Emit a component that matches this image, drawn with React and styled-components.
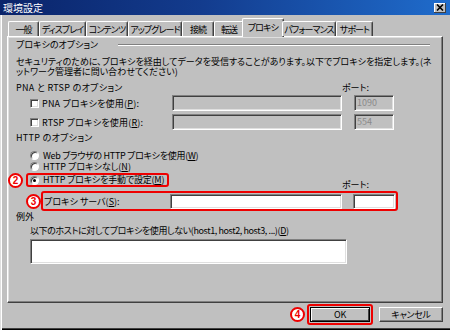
import React from "react";
import styled, { createGlobalStyle } from "styled-components";

const GlobalStyle = createGlobalStyle`
  html, body {
    margin: 0;
    padding: 0;
    background: #c0c0c0;
  }
  body {
    width: 450px;
    height: 330px;
    overflow: hidden;
    font-family: "Noto Sans CJK JP", "Noto Sans", sans-serif;
    font-size: 9px;
    font-feature-settings: "palt";
    color: #000;
  }
  * {
    box-sizing: border-box;
  }
`;

const Window = styled.div`
  width: 450px;
  height: 330px;
  display: flex;
  flex-direction: column;
  background: #c0c0c0;
  box-shadow: inset 1px 0 #dfdfdf, inset 2px 0 #ffffff, inset 0 -1px #000,
    inset 0 -2px #404040;
`;

const TitleBar = styled.div`
  flex: none;
  height: 15px;
  display: flex;
  align-items: center;
  justify-content: space-between;
  padding: 0 4px 0 3px;
  background: linear-gradient(90deg, #0a246a 0%, #133c8e 45%, #1f6ccc 100%);
  color: #fff;
  font-size: 10px;
  line-height: 15px;
`;

const CloseBtn = styled.div`
  width: 12px;
  height: 10px;
  display: flex;
  align-items: center;
  justify-content: center;
  background: #c0c0c0;
  box-shadow: inset -1px -1px #404040, inset 1px 1px #fff;
`;

const Body = styled.div`
  flex: 1;
  display: flex;
  flex-direction: column;
  padding: 0 7px;
`;

const TabStrip = styled.div`
  display: flex;
  align-items: flex-end;
  height: 18px;
  margin: 3px 0 0 1px;
  position: relative;
  z-index: 1;
`;

const Tab = styled.div`
  width: ${(p) => (p.$active ? p.$w + 4 : p.$w)}px;
  height: ${(p) => (p.$active ? 19 : 15)}px;
  margin: ${(p) => (p.$active ? "0 -2px -1px" : "0")};
  display: flex;
  align-items: center;
  justify-content: center;
  padding-bottom: ${(p) => (p.$active ? 2 : 0)}px;
  background: #c0c0c0;
  border-top: 1px solid #fff;
  border-left: 1px solid #fff;
  border-right: 1px solid #404040;
  border-radius: 2px 2px 0 0;
  box-shadow: inset -1px 0 #808080;
  white-space: nowrap;
  letter-spacing: -0.9px;
  line-height: 1;
`;

const Panel = styled.div`
  height: 267px;
  padding: 1px 9px 0 8px;
  border: 1px solid;
  border-color: #fff #404040 #404040 #fff;
  box-shadow: inset -1px -1px #808080, inset 1px 1px #dfdfdf;
  display: flex;
  flex-direction: column;
`;

const GroupHead = styled.div`
  height: 12px;
  display: flex;
  align-items: center;
  white-space: nowrap;
`;

const GroupLine = styled.div`
  flex: 1;
  height: 2px;
  margin: 1px 3px 0 20px;
  border-top: 1px solid #808080;
  border-bottom: 1px solid #fff;
`;

const Desc = styled.div`
  margin-top: 7px;
  line-height: 10px;
  white-space: nowrap;
`;

const Label = styled.div`
  margin-top: ${(p) => p.$mt}px;
  padding-left: ${(p) => p.$indent || 0}px;
  height: 12px;
  line-height: 12px;
  letter-spacing: ${(p) => p.$ls || 0}px;
  white-space: nowrap;
`;

const Text = styled.span`
  letter-spacing: ${(p) => p.$ls || 0}px;
`;

const SectionRow = styled.div`
  margin-top: ${(p) => p.$mt}px;
  height: 12px;
  line-height: 12px;
  display: grid;
  grid-template-columns: 326px auto;
  white-space: nowrap;
`;

const OptionRow = styled.div`
  margin-top: ${(p) => p.$mt}px;
  height: 16px;
  display: grid;
  grid-template-columns: 144px 170px 40px;
  column-gap: 12px;
  align-items: center;
`;

const Check = styled.label`
  display: flex;
  align-items: center;
  gap: 3px;
  padding-left: 14px;
  white-space: nowrap;
`;

const Box = styled.span`
  width: 9px;
  height: 9px;
  flex: none;
  background: #fff;
  border: 1px solid;
  border-color: #808080 #fff #fff #808080;
  box-shadow: inset 1px 1px #404040, inset -1px -1px #dfdfdf;
`;

const Field = styled.div`
  height: ${(p) => p.$h || 16}px;
  width: ${(p) => (p.$w ? `${p.$w}px` : "auto")};
  margin-left: ${(p) => p.$ml || 0}px;
  margin-top: ${(p) => p.$mt || 0}px;
  padding: 1px 2px;
  background: ${(p) => (p.$off ? "#c0c0c0" : "#fff")};
  color: #8a8a8a;
  border: 1px solid;
  border-color: #808080 #fff #fff #808080;
  box-shadow: inset 1px 1px #404040, inset -1px -1px #dfdfdf;
  font-size: 9px;
  line-height: 12px;
`;

const Choice = styled.div`
  position: relative;
  margin-top: ${(p) => p.$mt}px;
  height: 11px;
  line-height: 11px;
  display: flex;
  align-items: center;
  gap: 4px;
  padding-left: 14px;
  white-space: nowrap;
`;

const Radio = styled.span`
  position: relative;
  width: 9px;
  height: 9px;
  flex: none;
  border-radius: 50%;
  background: #fff;
  border: 1px solid;
  border-color: #808080 #fff #fff #808080;
  box-shadow: inset 1px 1px #404040;
  &::after {
    content: "";
    display: ${(p) => (p.$on ? "block" : "none")};
    position: absolute;
    left: 2px;
    top: 2px;
    width: 3px;
    height: 3px;
    border-radius: 50%;
    background: #000;
  }
`;

const ManualRow = styled.div`
  position: relative;
  margin-top: 1px;
  height: 14px;
  display: grid;
  grid-template-columns: 326px auto;
`;

const Marked = styled.div`
  justify-self: start;
  margin-left: ${(p) => p.$ml}px;
  border: 2px solid #ee0000;
  border-radius: 3px;
`;

const ManualChoice = styled.div`
  height: 10px;
  line-height: 10px;
  display: flex;
  align-items: center;
  gap: 4px;
  padding: 0 3px 0 2px;
  white-space: nowrap;
`;

const PortHead = styled.span`
  align-self: end;
  line-height: 10px;
  margin-bottom: -3px;
  white-space: nowrap;
`;

const ServerRow = styled.div`
  position: relative;
  margin-top: 4px;
  height: 20px;
  display: flex;
`;

const ServerGrid = styled.div`
  height: 16px;
  display: grid;
  grid-template-columns: 115px 172px 42px;
  column-gap: 11px;
  align-items: center;
  padding: 0 1px;
  white-space: nowrap;
`;

const Badge = styled.span`
  position: absolute;
  left: ${(p) => p.$x}px;
  top: ${(p) => p.$y}px;
  width: 15px;
  height: 15px;
  border-radius: 50%;
  border: 2px solid #ee0000;
  background: #fff;
  color: #ee0000;
  font-family: "Liberation Sans", "Noto Sans", sans-serif;
  font-weight: bold;
  font-size: 10px;
  line-height: 11px;
  text-align: center;
  z-index: 2;
`;

const Footer = styled.div`
  display: flex;
  justify-content: flex-end;
  align-items: center;
  gap: 6px;
  margin-top: 1px;
`;

const OkFrame = styled.div`
  position: relative;
  padding: 1px;
  border: 2px solid #ee0000;
  border-radius: 3px;
`;

const Button = styled.div`
  width: ${(p) => p.$w}px;
  height: 15px;
  display: flex;
  align-items: center;
  justify-content: center;
  background: #c0c0c0;
  border: 1px solid;
  border-color: ${(p) => (p.$default ? "#000" : "#fff #404040 #404040 #fff")};
  box-shadow: ${(p) =>
    p.$default
      ? "inset 1px 1px #fff, inset -1px -1px #404040"
      : "inset -1px -1px #808080"};
  font-size: 9px;
  letter-spacing: -0.3px;
  line-height: 1;
`;

const tabs = [
  { label: "一般", w: 31 },
  { label: "ディスプレイ", w: 47 },
  { label: "コンテンツ", w: 42 },
  { label: "アップグレード", w: 54 },
  { label: "接続", w: 32 },
  { label: "転送", w: 30 },
  { label: "プロキシ", w: 38, active: true },
  { label: "パフォーマンス", w: 54 },
  { label: "サポート", w: 37 },
];

const App = () => {
  return (
    <>
      <GlobalStyle />
      <Window>
        <TitleBar>
          <span>環境設定</span>
          <CloseBtn>
            <svg width="8" height="7" viewBox="0 0 8 7">
              <path d="M1 0.5 L7 6.5 M7 0.5 L1 6.5" stroke="#000" strokeWidth="1.6" />
            </svg>
          </CloseBtn>
        </TitleBar>
        <Body>
          <TabStrip>
            {tabs.map((t) => (
              <Tab key={t.label} $w={t.w} $active={t.active}>
                {t.label}
              </Tab>
            ))}
          </TabStrip>
          <Panel>
            <GroupHead>
              プロキシのオプション
              <GroupLine />
            </GroupHead>
            <Desc>
              セキュリティのために、プロキシを経由してデータを受信することがあります。以下でプロキシを指定します。(ネ
              <br />
              ットワーク管理者に問い合わせてください)
            </Desc>

            <SectionRow $mt={5}>
              <Text $ls={0.3}>PNA と RTSP のオプション</Text>
              <span>ポート:</span>
            </SectionRow>
            <OptionRow $mt={1}>
              <Check>
                <Box />
                <Text $ls={0.2}>
                  PNA プロキシを使用(<u>P</u>):
                </Text>
              </Check>
              <Field $off />
              <Field $off>1090</Field>
            </OptionRow>
            <OptionRow $mt={3}>
              <Check>
                <Box />
                <Text $ls={0.2}>
                  RTSP プロキシを使用(<u>R</u>):
                </Text>
              </Check>
              <Field $off />
              <Field $off>554</Field>
            </OptionRow>

            <Label $mt={2} $ls={0.3}>
              HTTP のオプション
            </Label>
            <Choice $mt={6}>
              <Radio />
              <Text $ls={-0.3}>
                Web ブラウザの HTTP プロキシを使用(<u>W</u>)
              </Text>
            </Choice>
            <Choice $mt={0}>
              <Radio />
              <span>
                HTTP プロキシなし(<u>N</u>)
              </span>
            </Choice>
            <ManualRow>
              <Badge $x={-8} $y={0}>2</Badge>
              <Marked $ml={10}>
                <ManualChoice>
                  <Radio $on />
                  <Text $ls={-0.2}>
                    HTTP プロキシを手動で設定(<u>M</u>)
                  </Text>
                </ManualChoice>
              </Marked>
              <PortHead>ポート:</PortHead>
            </ManualRow>
            <ServerRow>
              <Badge $x={10} $y={3}>3</Badge>
              <Marked $ml={25}>
                <ServerGrid>
                  <span>
                    プロキシ サーバ(<u>S</u>):
                  </span>
                  <Field $h={15} />
                  <Field $h={15} />
                </ServerGrid>
              </Marked>
            </ServerRow>

            <Label $mt={0}>例外</Label>
            <Label $mt={2} $indent={14} $ls={-0.4}>
              以下のホストに対してプロキシを使用しない(host1, host2, host3, ...)(<u>D</u>)
            </Label>
            <Field $h={25} $w={317} $ml={14} $mt={2} />
          </Panel>
          <Footer>
            <OkFrame>
              <Badge $x={-19} $y={1}>4</Badge>
              <Button $w={60} $default>
                OK
              </Button>
            </OkFrame>
            <Button $w={64}>キャンセル</Button>
          </Footer>
        </Body>
      </Window>
    </>
  );
};

export default App;
